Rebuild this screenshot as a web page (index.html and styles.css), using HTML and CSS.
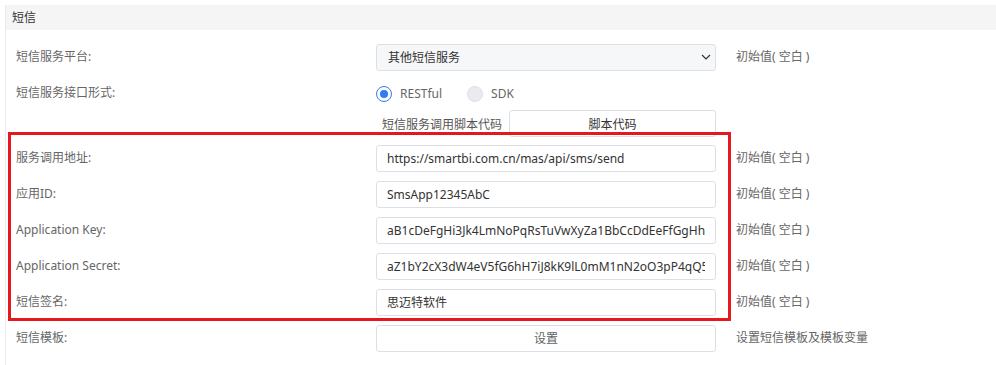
FILE: index.html
```html
<!DOCTYPE html>
<html lang="zh-CN">
<head>
    <meta charset="UTF-8">
    <title>短信</title>
    <link rel="stylesheet" href="styles.css">
</head>
<body>

    <div class="section">
        <div class="section-title">短信</div>

        <div class="section-body">
            <div class="row">
                <div class="label">短信服务平台:</div>
                <div class="control">
                    <div class="select">
                        <span>其他短信服务</span>
                        <svg class="chevron" width="10" height="6" viewBox="0 0 10 6">
                            <path d="M1 1 L5 5 L9 1" fill="none" stroke="#333" stroke-width="1.2"/>
                        </svg>
                    </div>
                </div>
                <div class="note">初始值( 空白 )</div>
            </div>

            <div class="row row-radio">
                <div class="label">短信服务接口形式:</div>
                <div class="control radios">
                    <span class="radio checked"></span><span class="radio-text">RESTful</span>
                    <span class="radio"></span><span class="radio-text">SDK</span>
                </div>
            </div>

            <div class="row row-sub">
                <div class="label"></div>
                <div class="control sub">
                    <span class="sub-text">短信服务调用脚本代码</span>
                    <button class="btn btn-dark">脚本代码</button>
                </div>
            </div>

            <div class="highlight">
                <div class="row">
                    <div class="label">服务调用地址:</div>
                    <div class="control"><input class="input" value="https://smartbi.com.cn/mas/api/sms/send"></div>
                    <div class="note">初始值( 空白 )</div>
                </div>
                <div class="row">
                    <div class="label">应用ID:</div>
                    <div class="control"><input class="input" value="SmsApp12345AbC"></div>
                    <div class="note">初始值( 空白 )</div>
                </div>
                <div class="row">
                    <div class="label">Application Key:</div>
                    <div class="control"><input class="input" value="aB1cDeFgHi3Jk4LmNoPqRsTuVwXyZa1BbCcDdEeFfGgHhIiJj"></div>
                    <div class="note">初始值( 空白 )</div>
                </div>
                <div class="row">
                    <div class="label">Application Secret:</div>
                    <div class="control"><input class="input" value="aZ1bY2cX3dW4eV5fG6hH7iJ8kK9lL0mM1nN2oO3pP4qQ5rR6"></div>
                    <div class="note">初始值( 空白 )</div>
                </div>
                <div class="row">
                    <div class="label">短信签名:</div>
                    <div class="control"><input class="input" value="思迈特软件"></div>
                    <div class="note">初始值( 空白 )</div>
                </div>
            </div>

            <div class="row">
                <div class="label">短信模板:</div>
                <div class="control"><button class="btn">设置</button></div>
                <div class="note">设置短信模板及模板变量</div>
            </div>
        </div>
    </div>

</body>
</html>
```

FILE: styles.css
```css
body {
    margin: 0;
    background: #fff;
    font-family: "Noto Sans", "Noto Sans CJK SC", sans-serif;
    font-size: 12px;
    color: #666;
}

.section {
    margin: 5px 0 0 5px;
    border-left: 1px solid #ebebeb;
    height: 360px;
}

.section-title {
    height: 25px;
    line-height: 25px;
    padding-left: 6px;
    background: #f5f5f5;
    color: #333;
    font-size: 12px;
}

.section-body {
    padding: 9px 0 0 10px;
}

.row {
    display: grid;
    grid-template-columns: 360px 340px auto;
    align-items: center;
    height: 36px;
}

.row-radio {
    height: 35px;
}

.row-sub {
    height: 27px;
    margin-bottom: 3px;
}

.label {
    line-height: 16px;
}

.note {
    padding-left: 20px;
    line-height: 16px;
}

.select {
    display: flex;
    align-items: center;
    justify-content: space-between;
    box-sizing: border-box;
    height: 27px;
    padding: 0 4px 0 11px;
    background: #f6f7f9;
    border: 1px solid #dcdfe6;
    border-radius: 3px;
    color: #333;
}

.input {
    display: block;
    box-sizing: border-box;
    width: 100%;
    height: 27px;
    padding: 0 10px;
    border: 1px solid #dcdfe6;
    border-radius: 3px;
    background: #fff;
    font-family: inherit;
    font-size: 12px;
    color: #333;
    outline: none;
}

.btn {
    display: block;
    box-sizing: border-box;
    width: 100%;
    height: 27px;
    border: 1px solid #dcdfe6;
    border-radius: 3px;
    background: #fff;
    font-family: inherit;
    font-size: 12px;
    color: #606266;
    padding: 0;
}

.btn-dark {
    color: #333;
}

.radios {
    display: flex;
    align-items: center;
    padding-top: 2px;
}

.radio {
    box-sizing: border-box;
    width: 16px;
    height: 16px;
    border-radius: 50%;
    border: 1px solid #dcdfe6;
    background: #e9ebf0;
    position: relative;
}

.radio.checked {
    border: 1.5px solid #2f7cf6;
    background: #fff;
}

.radio.checked::after {
    content: "";
    position: absolute;
    left: 50%;
    top: 50%;
    width: 8px;
    height: 8px;
    margin: -4px 0 0 -4px;
    border-radius: 50%;
    background: #2f7cf6;
}

.radio-text {
    margin: 0 25px 0 8px;
    color: #666;
}

.sub {
    display: flex;
    align-items: center;
}

.sub-text {
    padding-left: 6px;
    width: 127px;
    flex: none;
    color: #555;
}

.sub .btn {
    flex: 1;
}

.highlight {
    position: relative;
}

.highlight::before {
    content: "";
    position: absolute;
    left: -8px;
    top: -8px;
    width: 723px;
    height: 189px;
    box-sizing: border-box;
    border: 3px solid #e5171f;
    pointer-events: none;
}
```
